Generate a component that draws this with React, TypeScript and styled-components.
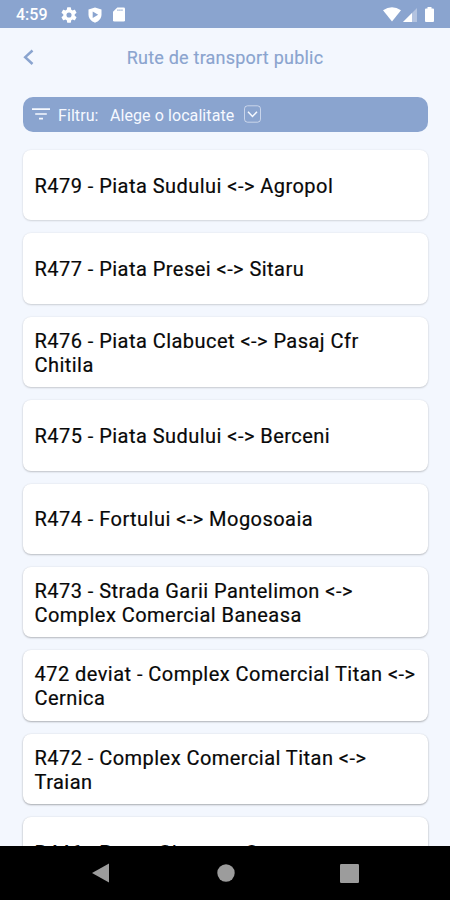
import React from "react";
import styled, { createGlobalStyle } from "styled-components";

const Global = createGlobalStyle`
  * { box-sizing: border-box; }
  body { margin: 0; background: #f3f7fe; font-family: Roboto, sans-serif; }
`;

const Screen = styled.div`
  width: 450px;
  height: 900px;
  display: flex;
  flex-direction: column;
  overflow: hidden;
  background: #f3f7fe;
`;

const StatusBar = styled.header`
  height: 28px;
  flex: none;
  display: flex;
  align-items: center;
  justify-content: space-between;
  padding: 1px 16px 0 16px;
  background: #8aa4cf;
  color: #fff;
`;

const Group = styled.div<{ $gap: number }>`
  display: flex;
  align-items: center;
  gap: ${(p) => p.$gap}px;
`;

const Clock = styled.span`
  width: 34px;
  font-size: 16px;
  font-weight: 500;
  line-height: 20px;
  white-space: nowrap;
  padding-top: 1px;
`;

const TitleBar = styled.div`
  height: 58px;
  flex: none;
  display: grid;
  grid-template-columns: 40px 1fr 40px;
  align-items: center;
  color: #8aa4cf;
`;

const BackButton = styled.button`
  display: flex;
  padding: 0 0 0 22px;
  border: 0;
  background: none;
  color: inherit;
`;

const Title = styled.h1`
  margin: 2px 0 0;
  text-align: center;
  font-size: 18px;
  font-weight: 400;
  line-height: 22px;
  letter-spacing: 0.22px;
  -webkit-text-stroke: 0.15px currentColor;
`;

const FilterBar = styled.div`
  height: 34.5px;
  flex: none;
  display: flex;
  align-items: center;
  margin: 11px 22px 0 23px;
  padding-left: 9px;
  border-radius: 10px;
  background: #8aa4cf;
  color: #f6f9ff;
  font-size: 16px;
  line-height: 20px;
  letter-spacing: 0.08px;
  white-space: nowrap;
`;

const FilterLabel = styled.span`
  width: 52px;
  margin-left: 8px;
  padding-top: 3px;
`;

const FilterValue = styled.span`
  width: 134px;
  padding-top: 3px;
`;

const RouteList = styled.main`
  flex: 1;
  min-height: 0;
  overflow: hidden;
  display: flex;
  flex-direction: column;
  gap: 13px;
  padding: 18.5px 22px 0 23px;
`;

const RouteCard = styled.article<{ $depth: number }>`
  height: 70.4px;
  flex: none;
  display: flex;
  align-items: center;
  padding: 1.4px 0 0 11.5px;
  border-radius: 8px;
  background: #fff;
  box-shadow: 0 1px 2px rgba(0, 0, 0, ${(p) => p.$depth}), 0 0 2px rgba(0, 0, 0, 0.08);
  color: #080808;
  font-size: 20px;
  font-weight: 400;
  line-height: 24px;
  letter-spacing: 0.46px;
  white-space: pre-line;
  -webkit-text-stroke: 0.2px #080808;
`;

const NavBar = styled.nav`
  height: 54px;
  flex: none;
  display: grid;
  grid-template-columns: 1fr 24px 1fr;
  align-items: center;
  background: #000;
`;

const NavSlot = styled.div<{ $side: "left" | "center" | "right" }>`
  display: flex;
  justify-content: ${(p) => (p.$side === "left" ? "flex-end" : p.$side === "right" ? "flex-start" : "center")};
  padding: ${(p) => (p.$side === "left" ? "0 104px 0 0" : p.$side === "right" ? "0 0 0 103px" : "0 0 0 1px")};
`;

const routes = [
  "R479 - Piata Sudului <-> Agropol",
  "R477 - Piata Presei <-> Sitaru",
  "R476 - Piata Clabucet <-> Pasaj Cfr\nChitila",
  "R475 - Piata Sudului <-> Berceni",
  "R474 - Fortului <-> Mogosoaia",
  "R473 - Strada Garii Pantelimon <->\nComplex Comercial Baneasa",
  "472 deviat - Complex Comercial Titan <->\nCernica",
  "R472 - Complex Comercial Titan <->\nTraian",
  "R446 - Presa Ghencea Corneu",
];

const Gear = () => (
  <svg width="16" height="16" viewBox="2 2 20 20" fill="currentColor">
    <path d="M19.14 12.94a7.1 7.1 0 0 0 0-1.88l2.03-1.58a.5.5 0 0 0 .12-.61l-1.92-3.32a.5.5 0 0 0-.59-.22l-2.39.96a7 7 0 0 0-1.62-.94l-.36-2.54a.5.5 0 0 0-.48-.41h-3.84a.5.5 0 0 0-.47.41l-.36 2.54a7.4 7.4 0 0 0-1.62.94l-2.39-.96a.5.5 0 0 0-.59.22L2.74 8.87a.5.5 0 0 0 .12.61l2.03 1.58a7.1 7.1 0 0 0 0 1.88l-2.03 1.58a.5.5 0 0 0-.12.61l1.92 3.32c.12.22.37.29.59.22l2.39-.96c.5.38 1.03.7 1.62.94l.36 2.54c.05.24.24.41.48.41h3.84c.24 0 .44-.17.47-.41l.36-2.54a7.4 7.4 0 0 0 1.62-.94l2.39.96c.22.08.47 0 .59-.22l1.92-3.32a.5.5 0 0 0-.12-.61zM12 15.2a3.2 3.2 0 1 1 0-6.4 3.2 3.2 0 0 1 0 6.4z" />
  </svg>
);

const Shield = () => (
  <svg width="14" height="16" viewBox="0 0 14 16">
    <path d="M7 .4 13.5 2.6V7.6C13.5 11.5 10.8 14.5 7 15.7 3.2 14.5.5 11.5.5 7.6V2.6Z" fill="#fff" />
    <path d="M4.7 4.6 10.2 7.8 4.7 11Z" fill="#8aa4cf" />
  </svg>
);

const SdCard = () => (
  <svg width="12" height="15" viewBox="0 0 12 15">
    <path d="M4.3.5H10.7Q12 .5 12 1.8V13.2Q12 14.5 10.7 14.5H1.3Q0 14.5 0 13.2V4.8Z" fill="#fff" />
    <path d="M4.3 3.2H9.7" stroke="#8aa4cf" strokeWidth="1.3" strokeDasharray="1.3 .7" />
  </svg>
);

const Wifi = () => (
  <svg width="18" height="15" viewBox="0 0 18 15">
    <path d="M0 3.2Q9-2.8 18 3.2L9 14.5Z" fill="#fff" />
  </svg>
);

const Signal = () => (
  <svg width="14" height="14" viewBox="0 0 14 14">
    <path d="M14 0V14H0Z" fill="#fff" fillOpacity=".35" />
    <path d="M9 5V14H0Z" fill="#fff" />
  </svg>
);

const Battery = () => (
  <svg width="9" height="15" viewBox="0 0 9 15">
    <path d="M2.5 1.5V0H6.5V1.5H8Q9 1.5 9 2.5V14Q9 15 8 15H1Q0 15 0 14V2.5Q0 1.5 1 1.5Z" fill="#fff" />
  </svg>
);

export default function App() {
  return (
    <Screen>
      <Global />
      <StatusBar>
        <Group $gap={11}>
          <Clock>4:59</Clock>
          <Gear />
          <Shield />
          <SdCard />
        </Group>
        <Group $gap={8}>
          <Group $gap={2}>
            <Wifi />
            <Signal />
          </Group>
          <Battery />
        </Group>
      </StatusBar>
      <TitleBar>
        <BackButton aria-label="Inapoi">
          <svg width="13" height="16" viewBox="0 0 13 16" fill="none" stroke="currentColor" strokeWidth="2.5">
            <path d="M10.5 1.5 3.2 8.2 10.5 15" />
          </svg>
        </BackButton>
        <Title>Rute de transport public</Title>
      </TitleBar>
      <FilterBar>
        <svg width="18" height="12" viewBox="0 0 18 12" stroke="currentColor" strokeWidth="1.7">
          <path d="M0 1.2H18M3.2 6H14.8M7 10.7H11" />
        </svg>
        <FilterLabel>Filtru:</FilterLabel>
        <FilterValue>Alege o localitate</FilterValue>
        <svg width="17" height="18" viewBox="0 0 17 18" fill="none" stroke="currentColor">
          <rect x=".5" y=".8" width="16" height="16.4" rx="3" strokeWidth=".9" strokeOpacity=".65" />
          <path d="M4 6.7 8.5 11.4 13 6.7" strokeWidth="1.5" />
        </svg>
      </FilterBar>
      <RouteList>
        {routes.map((route, i) => (
          <RouteCard key={route} $depth={0.12 + i * 0.025}>
            {route}
          </RouteCard>
        ))}
      </RouteList>
      <NavBar>
        <NavSlot $side="left">
          <svg width="17" height="20" viewBox="0 0 17 20">
            <path d="M17 .5V19.5L0 10Z" fill="#9c9c9c" />
          </svg>
        </NavSlot>
        <NavSlot $side="center">
          <svg width="18" height="18" viewBox="0 0 18 18">
            <circle cx="9" cy="9" r="8.7" fill="#9c9c9c" />
          </svg>
        </NavSlot>
        <NavSlot $side="right">
          <svg width="19" height="19" viewBox="0 0 19 19">
            <rect width="19" height="19" rx="1.2" fill="#9c9c9c" />
          </svg>
        </NavSlot>
      </NavBar>
    </Screen>
  );
}
